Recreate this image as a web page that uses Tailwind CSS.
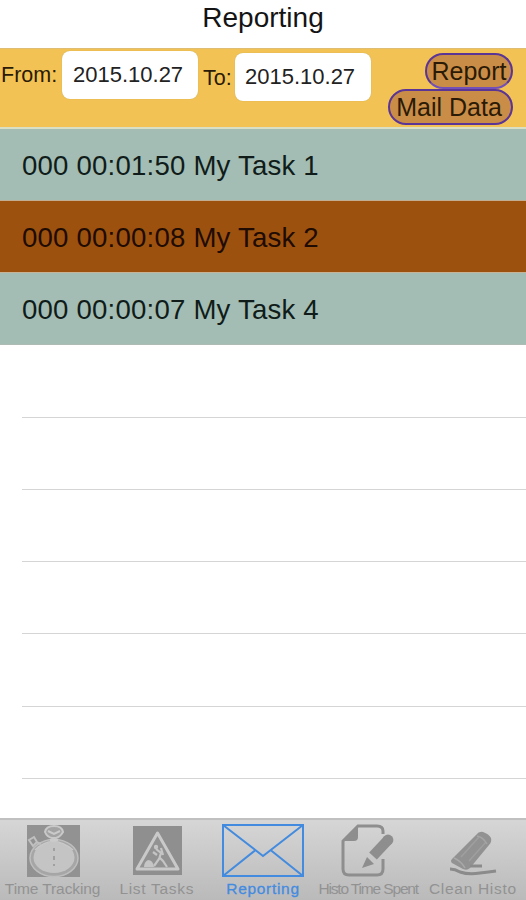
<!DOCTYPE html>
<html lang="en">
<head>
  <meta charset="UTF-8">
  <title>Reporting</title>
  <script src="https://cdn.jsdelivr.net/npm/@tailwindcss/browser@4"></script>
</head>
<body class="bg-white text-[#141414] font-['Liberation_Sans',Arial,sans-serif]">
  <div class="w-[526px] h-[900px] flex flex-col overflow-hidden">

    <header class="h-12 shrink-0 flex justify-center pt-[2px]">
      <h1 class="text-[28px] leading-8">Reporting</h1>
    </header>

    <!-- Date range and actions -->
    <section class="h-[79px] shrink-0 flex items-start bg-[#f2c354] border-t border-[#dfbd72] text-[#2b1a05]">
      <label class="w-[62px] pl-px pt-[12px] text-[21.5px] leading-7">From:</label>
      <div class="w-[136px] h-[48px] mt-[2px] pl-[11px] rounded-lg bg-white text-[#222] text-[22px] leading-[47px] shadow-[0_0_1px_#b99a50]">2015.10.27</div>
      <label class="w-[37px] pl-[5px] pt-[15px] text-[21.5px] leading-7">To:</label>
      <div class="w-[136px] h-[48px] mt-[4px] pl-[10px] rounded-lg bg-white text-[#222] text-[22px] leading-[47px] shadow-[0_0_1px_#b99a50]">2015.10.27</div>
      <div class="ml-auto mr-[13px] pt-[4px] flex flex-col items-end">
        <button class="w-[88px] h-[36px] rounded-full border-2 border-[#5b3596] border-b-[#7350b8] bg-[#c98d48] text-[25px] leading-[30px]">Report</button>
        <button class="w-[125px] h-[36px] pr-[3px] rounded-full border-2 border-[#5b3596] bg-[#c98d48] text-[25px] leading-[30px]">Mail Data</button>
      </div>
    </section>

    <!-- Tasks -->
    <main class="grow flex flex-col border-t-2 border-[#d9dfc4]">
      <div class="h-[72px] shrink-0 pl-[22px] bg-[#a3bdb4] border-b border-[#c2ad92] text-[27.6px] tracking-[0.2px] leading-[73px] text-[#101c19]">000 00:01:50 My Task 1</div>
      <div class="h-[72px] shrink-0 pl-[22px] bg-[#9d510f] border-b border-[#c9b396] text-[27.6px] tracking-[0.2px] leading-[73px] text-[#200b02]">000 00:00:08 My Task 2</div>
      <div class="h-[72px] shrink-0 pl-[22px] bg-[#a3bdb4] border-b border-[#aebbb5] text-[27.6px] tracking-[0.2px] leading-[73px] text-[#101c19]">000 00:00:07 My Task 4</div>
      <div class="h-[73px] shrink-0 ml-[22px] border-b border-[#d5d5d5]"></div>
      <div class="h-[72px] shrink-0 ml-[22px] border-b border-[#d5d5d5]"></div>
      <div class="h-[72px] shrink-0 ml-[22px] border-b border-[#d5d5d5]"></div>
      <div class="h-[72px] shrink-0 ml-[22px] border-b border-[#d5d5d5]"></div>
      <div class="h-[73px] shrink-0 ml-[22px] border-b border-[#d5d5d5]"></div>
      <div class="h-[72px] shrink-0 ml-[22px] border-b border-[#d5d5d5]"></div>
    </main>

    <!-- Tab bar -->
    <nav class="h-[82px] shrink-0 grid grid-cols-5 border-t-2 border-[#c0c0c0] bg-linear-to-b from-[#d6d6d6] to-[#bababa] text-[#929292] text-[15.5px] leading-[18px] whitespace-nowrap">
      <a class="flex flex-col items-center pt-[3px]">
        <svg class="w-[54px] h-[56px] shrink-0" viewBox="0 0 54 56">
          <rect x="1" y="2" width="53" height="52" fill="#929292"/>
          <ellipse cx="28" cy="35" rx="24" ry="18.5" fill="#a6a6a6" stroke="#bebebe" stroke-width="1.5"/>
          <ellipse cx="28" cy="34.500" rx="20.500" ry="15.500" fill="#c4c4c4"/>
          <path d="M9 27Q27 10 47 27" fill="none" stroke="#c9c9c9" stroke-width="1.500"/>
          <path d="M28 25v3M28 33v4M28 41v2" stroke="#949494" stroke-width="1.5"/>
          <path d="M19 9Q20 3 28 3t9 6q-3 5-7 6h-4q-5-1-7-6z" fill="#a3a3a3" stroke="#c9c9c9" stroke-width="2"/>
          <path d="M22 8l6 3 6-3M24 17h8" fill="none" stroke="#cbcbcb" stroke-width="2"/>
          <path d="M3 17l5-3 3 5-4 4zM10 19l5 2" fill="none" stroke="#c0c0c0" stroke-width="2"/>
        </svg>
        <span class="mt-[1px] tracking-[-0.1px]">Time Tracking</span>
      </a>
      <a class="flex flex-col items-center pt-[3px]">
        <svg class="w-[50px] h-[56px] shrink-0" viewBox="0 0 50 56">
          <rect x="0" y="3" width="49" height="49" fill="#8f8f8f"/>
          <path d="M24.500 10L45 46H4z" fill="#929292" stroke="#c9c9c9" stroke-width="3" stroke-linejoin="round"/>
          <circle cx="23" cy="24" r="2.200" fill="#c5c5c5"/>
          <path d="M23 26l5 4-2 6-5 7M26 34l4 4 4 6M20 29l4 3M28 25l2 7" fill="none" stroke="#c5c5c5" stroke-width="2.200"/>
          <path d="M11 44q0-5 4-7 5 0 6 7z" fill="#c5c5c5"/>
        </svg>
        <span class="mt-[1px] mr-[2px] tracking-[0.7px]">List Tasks</span>
      </a>
      <a class="flex flex-col items-center pt-[3px] text-[#448be0]">
        <svg class="w-[84px] h-[56px] shrink-0" viewBox="0 0 84 56" fill="none" stroke="#438bdf" stroke-width="2">
          <rect x="2" y="2" width="80" height="51"/>
          <path d="M2 2L42 33L82 2M2 53L34.500 27M82 53L49.500 27"/>
        </svg>
        <span class="mt-[1px] tracking-[0.7px] [-webkit-text-stroke:0.3px_#448be0]">Reporting</span>
      </a>
      <a class="flex flex-col items-center pt-[3px]">
        <svg class="w-[54px] h-[56px] shrink-0" viewBox="0 0 54 56">
          <path d="M42 11V8q0-5-6-5H17L2 18v28q0 6 6 6h28q6 0 6-6V36" fill="none" stroke="#8e8e8e" stroke-width="3"/>
          <path d="M2 18L17 3v11q0 4-4 4z" fill="#8e8e8e"/>
          <path d="M32 33L47 17" stroke="#8e8e8e" stroke-width="10.500"/>
          <circle cx="47" cy="17" r="5.400" fill="#8e8e8e"/>
          <path d="M26 34l7 7-12 4z" fill="#8e8e8e"/>
        </svg>
        <span class="mt-[1px] tracking-[-1.15px]">Histo Time Spent</span>
      </a>
      <a class="flex flex-col items-center pt-[3px]">
        <svg class="w-[50px] h-[56px] shrink-0" viewBox="0 0 50 56">
          <path d="M28 12q3-4 7-3 6 2 8 6 1 4-2 7L22 45q-3 3-7 1L4 40q-2-2 0-4z" fill="#929292"/>
          <path d="M31 14L13 34M38 19L21 38" stroke="#9f9f9f" stroke-width="1.500"/>
          <path d="M29 13q6 1 10 8" fill="none" stroke="#a5a5a5" stroke-width="1.500"/>
          <path d="M6 35q7 3 11 10" fill="none" stroke="#a8a8a8" stroke-width="1.500"/>
          <path d="M22 43h12M2 46q5 0 10 3 9 3 20 1 9-1 16-2" fill="none" stroke="#8b8b8b" stroke-width="3"/>
        </svg>
        <span class="mt-[1px] mr-px tracking-[0.7px]">Clean Histo</span>
      </a>
    </nav>
  </div>
</body>
</html>
